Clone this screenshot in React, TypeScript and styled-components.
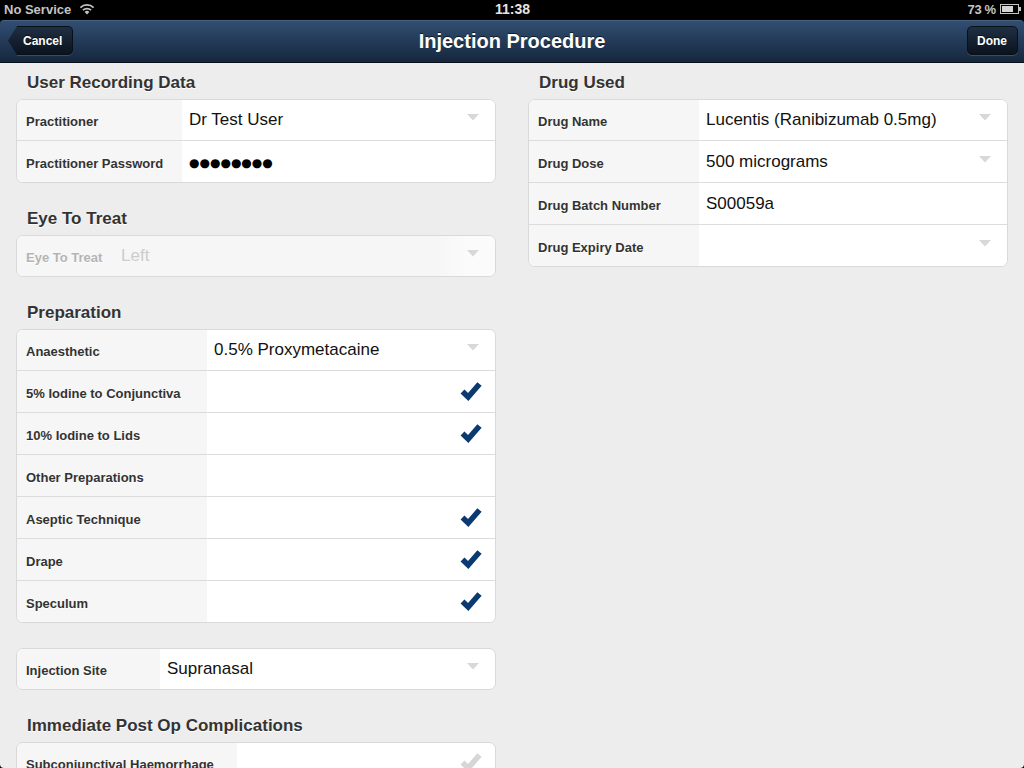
import React from "react";
import styled, {createGlobalStyle} from "styled-components";

const Global = createGlobalStyle`
  html, body {
    margin: 0;
    padding: 0;
    height: 100%;
    background: #000;
  }
  * {
    box-sizing: border-box;
  }
`;

const Page = styled.div`
  width: 1024px;
  height: 768px;
  overflow: hidden;
  display: flex;
  flex-direction: column;
  background: #000;
  font-family: "Liberation Sans", Arial, sans-serif;
`;

const StatusBar = styled.div`
  height: 20px;
  flex: none;
  display: grid;
  grid-template-columns: 1fr auto 1fr;
  align-items: center;
  padding: 0 3px 2px 4px;
  color: #c4c4c4;
  font-size: 13px;
  font-weight: bold;
`;

const StatusLeft = styled.div`
  display: flex;
  align-items: center;
  gap: 8px;
`;

const StatusRight = styled.div`
  display: flex;
  align-items: center;
  justify-content: flex-end;
  gap: 4px;
`;

const Clock = styled.div`
  color: #e4e4e4;
  font-size: 14px;
`;

const NavBar = styled.div`
  height: 43px;
  flex: none;
  position: relative;
  display: flex;
  align-items: center;
  justify-content: space-between;
  padding: 0 6px 2px 8px;
  border-radius: 4px 4px 0 0;
  border-top: 1px solid #48617f;
  border-bottom: 1px solid #0b1118;
  background: linear-gradient(#314e72, #15273d);
`;

const NavTitle = styled.div`
  position: absolute;
  left: 0;
  right: 0;
  top: 8px;
  text-align: center;
  color: #fff;
  font-size: 20px;
  font-weight: bold;
  line-height: 24px;
  text-shadow: 0 -1px 0 rgba(0, 0, 0, .6);
`;

const NavButton = styled.div`
  position: relative;
  height: 29px;
  display: flex;
  align-items: center;
  padding: 0 10px 0 9px;
  border: 1px solid #0a1018;
  border-radius: 5px;
  background: linear-gradient(#1f2f43, #0b131e);
  box-shadow: 0 1px 0 rgba(255, 255, 255, .15);
  color: #fff;
  font-size: 12px;
  font-weight: bold;
  text-shadow: 0 -1px 0 rgba(0, 0, 0, .6);
`;

const BackButton = styled(NavButton)`
  margin-left: 9px;
  padding: 0 10px 0 6px;
  border-left: 0;
  border-radius: 0 5px 5px 0;
  &::before {
    content: '';
    position: absolute;
    left: -9px;
    top: -1px;
    width: 9px;
    height: 29px;
    clip-path: polygon(100% 0, 0 50%, 100% 100%);
    background: linear-gradient(#1f2f43, #0b131e);
  }
`;

const Content = styled.div`
  flex: 1;
  min-height: 0;
  display: grid;
  grid-template-columns: 480px 480px;
  column-gap: 32px;
  padding: 8px 16px 0;
  border-radius: 0 0 4px 4px;
  background: #ededed;
  overflow: hidden;
`;

const Column = styled.div`
  display: flex;
  flex-direction: column;
  gap: 24px;
`;

const Group = styled.div``;

const GroupTitle = styled.div`
  height: 28px;
  padding: 1px 0 0 11px;
  color: #333;
  font-size: 17px;
  font-weight: bold;
  line-height: 22px;
  text-shadow: 0 1px 0 #fff;
`;

const Card = styled.div`
  flex: none;
  border: 1px solid #d9d9d9;
  border-radius: 7px;
  background: #fff;
  overflow: hidden;
`;

const SiteCard = styled(Card)`
  margin-top: 1px;
`;

const Row = styled.div<{$disabled?: boolean}>`
  height: 42px;
  display: flex;
  border-bottom: 1px solid #dcdcdc;
  background: ${p => p.$disabled ? "#fbfbfb" : "#fff"};
  &:first-child {
    margin-top: -1px;
  }
  &:last-child {
    margin-bottom: -1px;
    border-bottom-color: transparent;
  }
`;

const Label = styled.div<{$width: number; $disabled?: boolean}>`
  width: ${p => p.$width}px;
  flex: none;
  padding: 3px 0 0 9px;
  display: flex;
  align-items: center;
  background: #f6f6f6;
  color: ${p => p.$disabled ? "#b4b4b4" : "#333"};
  font-size: 13px;
  font-weight: bold;
  text-shadow: 0 1px 0 #fff;
  white-space: nowrap;
`;

const Value = styled.div<{$disabled?: boolean}>`
  flex: 1;
  display: flex;
  align-items: center;
  padding: 0 14px 0 7px;
  color: ${p => p.$disabled ? "#cdcdcd" : "#111"};
  font-size: 17px;
  background: ${p => p.$disabled ? "linear-gradient(90deg, #f6f6f6 85%, #fbfbfb 93%)" : "transparent"};
`;

const Dots = styled.span`
  font-family: "DejaVu Sans", sans-serif;
  font-size: 12px;
  color: #000;
  padding-top: 2px;
`;

const Caret = styled.svg`
  margin-left: auto;
  flex: none;
  margin-top: -4px;
  margin-right: 1px;
`;

const Tick = styled.svg`
  margin-left: auto;
  flex: none;
  margin-top: -2px;
  margin-right: -2px;
`;

const WifiIcon = () => (
    <svg width="16" height="12" viewBox="0 0 16 12">
        <path d="M8 11.5 5.6 8.9a3.4 3.4 0 0 1 4.8 0z" fill="#c4c4c4"/>
        <path d="M3.9 7.2a5.9 5.9 0 0 1 8.2 0" fill="none" stroke="#c4c4c4" strokeWidth="1.7"/>
        <path d="M1.4 4.6a9.4 9.4 0 0 1 13.2 0" fill="none" stroke="#c4c4c4" strokeWidth="1.7"/>
    </svg>
);

const BatteryIcon = () => (
    <svg width="21" height="10" viewBox="0 0 21 10">
        <rect x=".5" y=".5" width="18" height="9" fill="none" stroke="#c4c4c4"/>
        <rect x="2" y="2" width="11" height="6" fill="#d4d4d4"/>
        <rect x="19" y="3" width="2" height="4" fill="#c4c4c4"/>
    </svg>
);

const CaretIcon = () => (
    <Caret width="14" height="7" viewBox="0 0 14 7">
        <path d="M1 0h12L7 6.5z" fill="#d8d8d8"/>
    </Caret>
);

const TickIcon = ({faded}: {faded?: boolean}) => (
    <Tick width="24" height="22" viewBox="0 0 24 22">
        <path d="M3.5 11.5 9.2 17 20.5 4" fill="none" stroke={faded ? "#d6d6d6" : "#0b3a70"} strokeWidth="5.6"/>
    </Tick>
);

interface FieldProps {
    label: string;
    width: number;
    value?: string;
    caret?: boolean;
    tick?: boolean;
    faded?: boolean;
    disabled?: boolean;
    children?: React.ReactNode;
}

const Field = ({label, width, value, caret, tick, faded, disabled, children}: FieldProps) => (
    <Row $disabled={disabled}>
        <Label $width={width} $disabled={disabled}>{label}</Label>
        <Value $disabled={disabled}>
            {value}
            {children}
            {caret && <CaretIcon/>}
            {tick && <TickIcon faded={faded}/>}
        </Value>
    </Row>
);

export default function App() {
    return (
        <Page>
            <Global/>
            <StatusBar>
                <StatusLeft>No Service <WifiIcon/></StatusLeft>
                <Clock>11:38</Clock>
                <StatusRight>{"73\u2009%"} <BatteryIcon/></StatusRight>
            </StatusBar>
            <NavBar>
                <BackButton>Cancel</BackButton>
                <NavTitle>Injection Procedure</NavTitle>
                <NavButton>Done</NavButton>
            </NavBar>
            <Content>
                <Column>
                    <Group>
                        <GroupTitle>User Recording Data</GroupTitle>
                        <Card>
                            <Field label="Practitioner" width={165} value="Dr Test User" caret/>
                            <Field label="Practitioner Password" width={165}><Dots>●●●●●●●●</Dots></Field>
                        </Card>
                    </Group>
                    <Group>
                        <GroupTitle>Eye To Treat</GroupTitle>
                        <Card>
                            <Field label="Eye To Treat" width={97} value="Left" caret disabled/>
                        </Card>
                    </Group>
                    <Group>
                        <GroupTitle>Preparation</GroupTitle>
                        <Card>
                            <Field label="Anaesthetic" width={190} value="0.5% Proxymetacaine" caret/>
                            <Field label="5% Iodine to Conjunctiva" width={190} tick/>
                            <Field label="10% Iodine to Lids" width={190} tick/>
                            <Field label="Other Preparations" width={190}/>
                            <Field label="Aseptic Technique" width={190} tick/>
                            <Field label="Drape" width={190} tick/>
                            <Field label="Speculum" width={190} tick/>
                        </Card>
                    </Group>
                    <SiteCard>
                        <Field label="Injection Site" width={143} value="Supranasal" caret/>
                    </SiteCard>
                    <Group>
                        <GroupTitle>Immediate Post Op Complications</GroupTitle>
                        <Card>
                            <Field label="Subconjunctival Haemorrhage" width={220} tick faded/>
                        </Card>
                    </Group>
                </Column>
                <Column>
                    <Group>
                        <GroupTitle>Drug Used</GroupTitle>
                        <Card>
                            <Field label="Drug Name" width={170} value="Lucentis (Ranibizumab 0.5mg)" caret/>
                            <Field label="Drug Dose" width={170} value="500 micrograms" caret/>
                            <Field label="Drug Batch Number" width={170} value="S00059a"/>
                            <Field label="Drug Expiry Date" width={170} caret/>
                        </Card>
                    </Group>
                </Column>
            </Content>
        </Page>
    );
}
